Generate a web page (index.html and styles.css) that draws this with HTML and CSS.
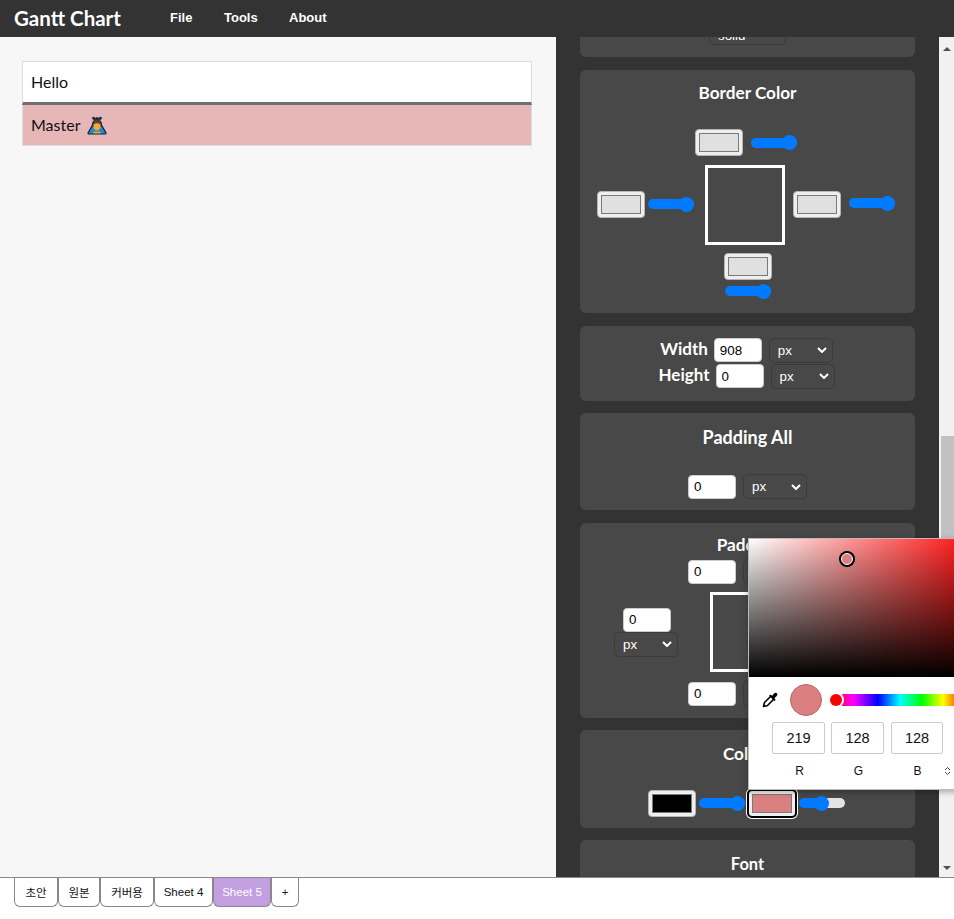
FILE: index.html
```html
<!DOCTYPE html>
<html lang="ko">
<head>
    <meta charset="UTF-8">
    <title>Gantt Chart</title>
    <link rel="stylesheet" href="styles.css">
</head>
<body>
    <header class="topbar">
        <div class="logo">Gantt Chart</div>
        <nav class="menu">
            <a class="menu-file">File</a>
            <a class="menu-tools">Tools</a>
            <a>About</a>
        </nav>
    </header>

    <main class="workspace">
        <section class="sheet">
            <div class="row row-head">Hello</div>
            <div class="row row-master">Master
                <svg class="emoji" viewBox="0 0 20 20" width="20" height="20">
                    <path d="M1 18 L5.500 10 H14.500 L19 18 Q19 19 18 19 H2 Q1 19 1 18Z" fill="#2a86cc" stroke="#10202e" stroke-width="1.200"/>
                    <path d="M5.500 9 Q6 4.500 10 4.500 Q14 4.500 14.500 9 V11 H5.500Z" fill="#6b3d1e" stroke="#1c1c28"/>
                    <path d="M6.500 9.500 Q10 7 13.500 9.500 Q14 15 10 15.500 Q6 15 6.500 9.500Z" fill="#f2a93a"/>
                    <path d="M5 2.500 Q7 1 8.500 3 Q10 1 11.500 3 Q13 1 15 2.500 Q15 5 12.500 5 H7.500 Q5 5 5 2.500Z" fill="#17344f"/>
                    <path d="M6.500 17.500 H13.500" stroke="#f2a93a" stroke-width="1.600"/>
                </svg>
            </div>
        </section>

        <aside class="panel">
            <div class="cards">
                <div class="card card-clipped">
                    <select class="unit unit-border"><option>solid</option></select>
                </div>

                <div class="card card-border">
                    <h3>Border Color</h3>
                    <div class="side side-top">
                        <input type="color" value="#e0e0e0">
                        <input type="range" value="100">
                    </div>
                    <div class="side side-middle">
                        <input type="color" value="#e0e0e0">
                        <input type="range" value="100">
                        <div class="box"></div>
                        <input type="color" value="#e0e0e0">
                        <input type="range" value="100">
                    </div>
                    <div class="side side-bottom">
                        <input type="color" value="#e0e0e0">
                        <input type="range" value="100">
                    </div>
                </div>

                <div class="card card-size">
                    <div class="size-row">
                        <label>Width</label>
                        <input type="text" class="num" value="908">
                        <select class="unit"><option>px</option></select>
                    </div>
                    <div class="size-row">
                        <label>Height</label>
                        <input type="text" class="num" value="0">
                        <select class="unit"><option>px</option></select>
                    </div>
                </div>

                <div class="card card-padall">
                    <h3>Padding All</h3>
                    <div class="num-row">
                        <input type="text" class="num" value="0">
                        <select class="unit"><option>px</option></select>
                    </div>
                </div>

                <div class="card card-padding">
                    <h3>Padding</h3>
                    <div class="num-row">
                        <input type="text" class="num" value="0">
                        <select class="unit"><option>px</option></select>
                    </div>
                    <div class="pad-middle">
                        <div class="pad-side">
                            <input type="text" class="num" value="0">
                            <select class="unit"><option>px</option></select>
                        </div>
                        <div class="box"></div>
                        <div class="pad-side">
                            <input type="text" class="num" value="0">
                            <select class="unit"><option>px</option></select>
                        </div>
                    </div>
                    <div class="num-row">
                        <input type="text" class="num" value="0">
                        <select class="unit"><option>px</option></select>
                    </div>
                </div>

                <div class="card card-color">
                    <h3>Colors</h3>
                    <div class="color-row">
                        <input type="color" value="#000000">
                        <input type="range" value="100">
                        <input type="color" class="active" value="#db8080">
                        <input type="range" class="half" value="50">
                    </div>
                </div>

                <div class="card card-font">
                    <h3>Font</h3>
                </div>
            </div>

            <div class="scrollbar">
                <div class="arrow arrow-up"></div>
                <div class="track"><div class="thumb"></div></div>
                <div class="arrow arrow-down"></div>
            </div>

            <div class="picker">
                <div class="picker-field"><span class="picker-dot"></span></div>
                <div class="picker-tools">
                    <svg class="dropper" viewBox="0 0 18 18" width="18" height="18">
                        <path d="M10.500 4.500 L3.500 11.500 L2.500 15.500 L6.500 14.500 L13.500 7.500" fill="#fff" stroke="#000" stroke-width="1.600" stroke-linejoin="round"/>
                        <path d="M9.500 3.500 L11 5 L13 2.600 Q14.500 1 16 2.300 Q17.200 3.800 15.500 5.200 L13.200 7.200 L14.700 8.700 L13.300 10 L8 4.800Z" fill="#000"/>
                    </svg>
                    <div class="picker-current"></div>
                    <div class="hue"><span class="hue-dot"></span></div>
                </div>
                <div class="picker-inputs">
                    <input type="text" value="219">
                    <input type="text" value="128">
                    <input type="text" value="128">
                </div>
                <div class="picker-labels">
                    <span>R</span><span>G</span><span>B</span>
                    <svg class="updown" viewBox="0 0 7 10" width="7" height="10">
                        <path d="M1 4 L3.500 1.500 L6 4 M1 6 L3.500 8.500 L6 6" fill="none" stroke="#444" stroke-width="1"/>
                    </svg>
                </div>
            </div>
        </aside>
    </main>

    <footer class="tabs">
        <button class="tab tab-1">초안</button>
        <button class="tab tab-2">원본</button>
        <button class="tab tab-3">커버용</button>
        <button class="tab tab-4">Sheet 4</button>
        <button class="tab tab-5 current">Sheet 5</button>
        <button class="tab tab-add">+</button>
    </footer>
</body>
</html>
```

FILE: styles.css
```css
* {
    box-sizing: border-box;
}
html, body {
    height: 100%;
}
body {
    margin: 0;
    height: 100vh;
    display: flex;
    flex-direction: column;
    overflow: hidden;
    background: #fff;
    font-family: Lato, "Noto Sans CJK KR", sans-serif;
}

/* top bar */
.topbar {
    height: 37px;
    flex: none;
    display: flex;
    align-items: center;
    background: #333;
    color: #fff;
    padding-left: 14px;
}
.logo {
    font-size: 20.500px;
    font-weight: bold;
    width: 156px;
    margin-top: -2px;
}
.menu {
    display: flex;
    font-family: "Liberation Sans", Arial, sans-serif;
    font-size: 13px;
    font-weight: bold;
    margin-top: -3px;
}
.menu-file {
    width: 54px;
}
.menu-tools {
    width: 65px;
}

/* main area */
.workspace {
    flex: 1;
    min-height: 0;
    display: flex;
}
.sheet {
    width: 556px;
    flex: none;
    background: #f7f7f7;
    padding: 24px 24px 0 22px;
}
.row {
    display: flex;
    align-items: center;
    gap: 7px;
    padding-left: 8px;
    font-size: 16px;
    color: #111;
    border: 1px solid #ddd;
}
.row-head {
    height: 44px;
    padding-bottom: 2px;
    background: #fff;
    border-bottom: 3px solid #6f6f6f;
}
.row-master {
    height: 41px;
    padding-bottom: 2px;
    background: #e7b7b7;
    border-top: 0;
}
.emoji {
    margin-top: 2px;
}

/* right panel */
.panel {
    flex: 1;
    display: flex;
    position: relative;
    background: #333;
    overflow: hidden;
}
.cards {
    flex: 1;
    padding: 0 24px;
    display: flex;
    flex-direction: column;
    gap: 12px;
    color: #fff;
}
.card {
    flex: none;
    background: #484848;
    border-radius: 6px;
    text-align: center;
}
.card h3 {
    margin: 0;
    font-size: 17.200px;
    line-height: 20px;
    font-weight: bold;
}
.card-clipped {
    height: 20px;
    border-radius: 0 0 6px 6px;
    display: flex;
    justify-content: center;
    align-items: flex-end;
    padding: 0 0 12px 0;
    overflow: hidden;
}
.card-border {
    height: 243px;
    margin-top: 1px;
    padding-top: 13px;
}
.card-size {
    height: 75px;
    margin-top: 1px;
    padding-top: 11px;
}
.card-padall {
    height: 97px;
    padding-top: 14px;
}
.card-padall h3 {
    font-size: 18px;
}
.card-padding {
    height: 195px;
    margin-top: 1px;
    padding-top: 13px;
}
.card-color {
    height: 98px;
    padding-top: 14px;
}
.card-font {
    height: 60px;
    padding-top: 14px;
}
.card-font h3 {
    font-size: 16.500px;
}

/* form controls */
.num {
    width: 48px;
    height: 24px;
    border: 1px solid #ccc;
    border-radius: 4px;
    background: #fff;
    color: #000;
    padding: 0 5px;
    font-family: "Liberation Sans", Arial, sans-serif;
    font-size: 13.330px;
}
.unit {
    appearance: none;
    width: 64px;
    height: 25px;
    padding: 0 8px;
    border: 1px solid #3b3b3b;
    border-radius: 5px;
    color: #fff;
    font-family: "Liberation Sans", Arial, sans-serif;
    font-size: 13.330px;
    background: #484848 url("data:image/svg+xml,%3Csvg xmlns='http://www.w3.org/2000/svg' width='10' height='6'%3E%3Cpath d='M1 1l4 4 4-4' fill='none' stroke='white' stroke-width='2'/%3E%3C/svg%3E") no-repeat right 5px center;
}
.unit-border {
    width: 77px;
    flex: none;
    padding-top: 5px;
}
input[type="color"] {
    appearance: none;
    width: 48px;
    height: 27px;
    flex: none;
    margin: 0;
    padding: 3px;
    border: 1px solid #b5b5b5;
    border-radius: 4px;
    background: #efefef;
}
input[type="color"]::-webkit-color-swatch-wrapper {
    padding: 0;
}
input[type="color"]::-webkit-color-swatch {
    border: 1px solid #7a7a7a;
    border-radius: 0;
}
input[type="color"].active {
    outline: 2px solid #000;
    outline-offset: -1px;
    box-shadow: 0 0 0 2px #fff;
}
input[type="range"] {
    appearance: none;
    width: 46px;
    height: 10px;
    flex: none;
    margin: 0;
    border-radius: 5px;
    background: #007bff;
}
input[type="range"]::-webkit-slider-thumb {
    appearance: none;
    width: 15px;
    height: 15px;
    border-radius: 50%;
    background: #007bff;
}
input[type="range"].half {
    background: linear-gradient(to right, #007bff 50%, #e3e3e3 50%);
}

/* border colour card */
.side {
    display: flex;
    align-items: center;
}
.side-top {
    justify-content: center;
    gap: 8px;
    margin: 26px 3px 9px 0;
}
.side-middle {
    padding-left: 17px;
}
.side-middle input {
    margin-bottom: 2px;
}
.side-middle input[type="range"] {
    margin-left: 3px;
}
.side-middle input[type="range"]:last-child {
    margin-left: 8px;
    margin-bottom: 4px;
}
.side-middle .box {
    margin: 0 8px 0 11px;
}
.side-bottom {
    flex-direction: column;
    gap: 6px;
    margin-top: 8px;
}
.box {
    width: 80px;
    height: 80px;
    flex: none;
    border: 3px solid #fff;
}

/* width and height card */
.size-row {
    display: flex;
    justify-content: center;
    align-items: center;
    height: 26px;
    gap: 7px;
    padding-right: 2px;
}
.size-row label {
    font-size: 17px;
    font-weight: bold;
    margin-right: -1px;
    margin-bottom: 3px;
}

/* padding cards */
.num-row {
    display: flex;
    justify-content: center;
    align-items: center;
    gap: 7px;
}
.card-padall .num-row {
    margin-top: 27px;
}
.pad-middle {
    display: flex;
    align-items: center;
    margin: 8px 0 9px 34px;
}
.pad-side {
    display: flex;
    flex-direction: column;
    align-items: center;
    width: 64px;
}
.pad-side .num {
    margin-left: 2px;
}
.pad-middle .box {
    margin: 0 26px 0 32px;
}
.card-padding h3 {
    line-height: 18px;
    margin-bottom: 5px;
}

/* colour card */
.color-row {
    display: flex;
    justify-content: center;
    gap: 3px;
    align-items: center;
    margin: 26px 3px 0 0;
}
.color-row input[type="range"] {
    margin-bottom: 1px;
}

/* fake scrollbar */
.scrollbar {
    width: 15px;
    flex: none;
    display: flex;
    flex-direction: column;
    background: #f1f1f1;
}
.arrow {
    height: 17px;
    flex: none;
    display: flex;
    justify-content: center;
    padding-top: 6px;
}
.arrow::before {
    content: "";
    border-left: 4px solid transparent;
    border-right: 4px solid transparent;
    height: 4px;
}
.arrow-up::before {
    border-bottom: 4px solid #505050;
}
.arrow-down::before {
    border-top: 4px solid #505050;
}
.track {
    flex: 1;
    padding-left: 2px;
}
.thumb {
    height: 240px;
    margin-top: 382px;
    background: #c1c1c1;
}

/* colour picker popup */
.picker {
    position: absolute;
    left: 192px;
    top: 501px;
    width: 240px;
    height: 252px;
    background: #fff;
    border: 1px solid #bbb;
    box-shadow: 0 2px 6px rgba(0, 0, 0, .3);
    font-family: "Liberation Sans", Arial, sans-serif;
}
.picker-field {
    height: 138px;
    position: relative;
    background:
        linear-gradient(to top, #000, rgba(0, 0, 0, 0)),
        linear-gradient(to right, #fff, #f00);
}
.picker-dot {
    position: absolute;
    left: 92px;
    top: 14px;
    width: 12px;
    height: 12px;
    border-radius: 50%;
    background: #db8080;
    border: 1px solid #fff;
    box-shadow: 0 0 0 2px #000;
}
.picker-tools {
    display: flex;
    align-items: center;
    height: 45px;
    padding: 0 0 0 12px;
}
.dropper {
    flex: none;
}
.picker-current {
    width: 32px;
    height: 32px;
    flex: none;
    margin: 0 0 0 11px;
    border-radius: 50%;
    background: #db8080;
    border: 1px solid #b56a6a;
}
.hue {
    position: relative;
    flex: none;
    width: 133px;
    height: 12px;
    margin-left: 10px;
    background: linear-gradient(to right, #f00 0, #f0f 21px, #00f 46px, #0ff 68px, #0f0 90px, #ff0 111px, #f00 133px);
}
.hue-dot {
    position: absolute;
    left: -2px;
    top: 0;
    width: 12px;
    height: 12px;
    border-radius: 50%;
    background: #f00;
    box-shadow: 0 0 0 2px #fff;
}
.picker-inputs {
    display: flex;
    gap: 6px;
    padding: 0 0 0 23px;
}
.picker-inputs input {
    width: 53px;
    height: 32px;
    text-align: center;
    border: 1px solid #ccc;
    border-radius: 2px;
    padding: 0;
    font-family: inherit;
    font-size: 14.500px;
    color: #111;
}
.picker-inputs input:last-child {
    width: 52px;
    margin-left: 1px;
}
.picker-labels {
    display: flex;
    align-items: center;
    gap: 6px;
    padding: 10px 0 0 24px;
    font-size: 12px;
    color: #111;
}
.picker-labels span {
    width: 53px;
    text-align: center;
}
.updown {
    margin-left: -6px;
}

/* sheet tabs */
.tabs {
    height: 42px;
    flex: none;
    display: flex;
    align-items: flex-start;
    padding-left: 14px;
    border-top: 1px solid #888;
    background: #fff;
}
.tab {
    height: 29px;
    padding: 0;
    border: 1px solid #888;
    border-top: 0;
    border-radius: 0 0 6px 6px;
    background: #fff;
    color: #111;
    font-family: "Liberation Sans", Arial, "Noto Sans CJK KR", sans-serif;
    font-size: 11.500px;
}
.tab-1 { width: 44px; }
.tab-2 { width: 42px; }
.tab-3 { width: 54px; }
.tab-4 { width: 59px; }
.tab-5 { width: 58px; }
.tab-add { width: 28px; }
.tab.current {
    background: #c39fe2;
    color: #fff;
}
```
